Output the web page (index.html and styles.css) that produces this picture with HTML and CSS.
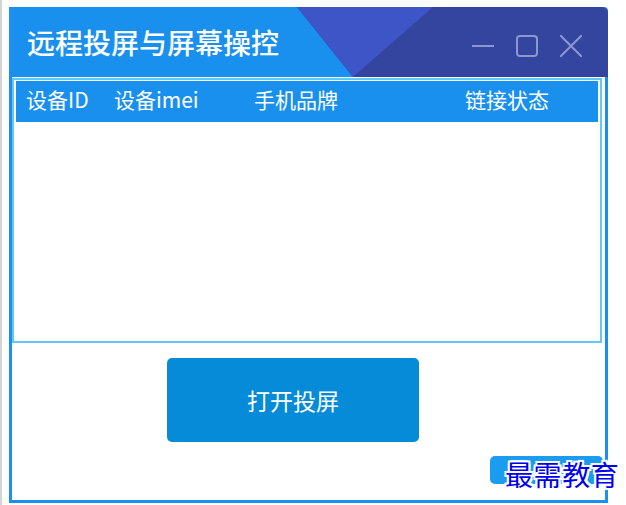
FILE: index.html
```html
<!DOCTYPE html>
<html lang="zh-CN">
<head>
    <meta charset="UTF-8">
    <title>远程投屏与屏幕操控</title>
    <link rel="stylesheet" href="styles.css">
</head>
<body>
    <div id="window">
        <div id="titlebar">
            <svg class="titleBg" width="599" height="70" viewBox="0 0 599 70">
                <polygon points="288,0 599,0 599,70 344,70" fill="#34459f"/>
                <polygon points="288,0 424,0 344,70" fill="#3d55c6"/>
            </svg>
            <h1>远程投屏与屏幕操控</h1>
            <div class="controls">
                <svg width="22" height="22" viewBox="0 0 22 22"><path d="M0 11H22" stroke="#8c97cf" stroke-width="2" fill="none"/></svg>
                <svg width="22" height="22" viewBox="0 0 22 22"><rect x="1" y="1" width="20" height="20" rx="3" stroke="#8c97cf" stroke-width="2" fill="none"/></svg>
                <svg width="22" height="22" viewBox="0 0 22 22"><path d="M0 0L22 22M22 0L0 22" stroke="#8c97cf" stroke-width="2" fill="none"/></svg>
            </div>
        </div>

        <div id="content">
            <div class="deviceTable">
                <div class="tableHead">
                    <span class="colId">设备ID</span>
                    <span class="colImei">设备imei</span>
                    <span class="colBrand">手机品牌</span>
                    <span>链接状态</span>
                </div>
            </div>
            <button class="openBtn">打开投屏</button>
            <div class="smallBtn"></div>
        </div>

        <div class="watermark">最需教育</div>
    </div>
</body>
</html>
```

FILE: styles.css
```css
*{
    margin: 0;
    padding: 0;
    box-sizing: border-box;
}
body{
    width: 626px;
    height: 505px;
    overflow: hidden;
    background-color: #fff;
    border-left: 2px solid #d4d4d4;
    font-family: "Noto Sans CJK SC", "Noto Sans", sans-serif;
    color: #fff;
}
#window{
    position: relative;
    width: 599px;
    height: 496px;
    margin: 7px 0 0 7px;
    background-color: #1a90ee;
    border-radius: 0 4px 0 0;
}
#titlebar{
    position: relative;
    height: 70px;
    display: flex;
    justify-content: space-between;
    align-items: center;
    padding: 0 26px 0 18px;
    overflow: hidden;
    border-radius: 0 6px 0 0;
    background: linear-gradient(90deg, #1a90ee 60%, #1a9bee);
}
.titleBg{
    position: absolute;
    left: 0;
    top: 0;
}
#titlebar h1{
    position: relative;
    font-size: 28px;
    font-weight: 500;
    line-height: 70px;
}
.controls{
    position: relative;
    display: flex;
    gap: 22px;
    margin-top: 7px;
}
#content{
    height: 423px;
    margin: 0 3px;
    display: flex;
    flex-direction: column;
    background-color: #fff;
}
.deviceTable{
    height: 265px;
    width: 590px;
    margin-top: 1px;
    padding: 1px 2px;
    border: 2px solid #62c9f2;
    background-color: #fff;
}
.tableHead{
    height: 41px;
    display: flex;
    align-items: center;
    padding: 0 0 5px 10px;
    background-color: #1a90ee;
    font-size: 21px;
}
.colId{
    width: 88px;
}
.colImei{
    width: 140px;
}
.colBrand{
    width: 211px;
}
.openBtn{
    width: 252px;
    height: 84px;
    margin: 15px 0 0 155px;
    border: none;
    border-radius: 5px;
    background-color: #068bd9;
    color: #fff;
    font-family: inherit;
    font-size: 23px;
}
.smallBtn{
    width: 113px;
    height: 28px;
    margin: 14px 0 0 478px;
    border-radius: 5px;
    background-color: #1a9cf0;
}
.watermark{
    position: absolute;
    left: 496px;
    top: 449px;
    font-size: 28px;
    line-height: 36px;
    letter-spacing: 0.6px;
    white-space: nowrap;
    color: #0000f0;
    text-shadow: 2px 0 0 #fff, -2px 0 0 #fff, 0 2px 0 #fff, 0 -2px 0 #fff, 2px 2px 0 #fff, -2px -2px 0 #fff, 2px -2px 0 #fff, -2px 2px 0 #fff;
}
```
